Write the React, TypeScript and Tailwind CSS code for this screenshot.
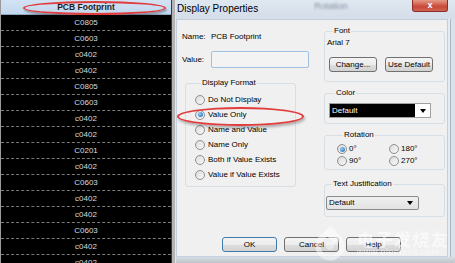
import React from "react";

const rows = [
  "C0805", "C0603", "c0402", "c0402", "C0805", "C0603", "c0402", "c0402",
  "C0201", "c0402", "C0603", "c0402", "c0402", "C0603", "c0402", "c0402",
];

function Radio({ checked }: { checked?: boolean }) {
  return (
    <span className="flex h-[10px] w-[10px] shrink-0 items-center justify-center rounded-full border border-[#8e8f8f] bg-[linear-gradient(135deg,#dcdcdc,#f8f8f8)]">
      {checked && (
        <span className="h-[5px] w-[5px] rounded-full bg-[radial-gradient(circle_at_35%_35%,#8fd0fa,#1d5fa6)]" />
      )}
    </span>
  );
}

function Btn({ label, w, def }: { label: string; w: string; def?: boolean }) {
  return (
    <div
      className={
        "flex h-[15px] items-center justify-center rounded-[3px] border bg-[linear-gradient(#f4f4f4_0%,#ececec_50%,#dedede_50%,#d2d2d2_100%)] text-[8px] leading-none text-black " +
        w +
        (def ? " border-[#3d7bad]" : " border-[#707070]")
      }
    >
      {label}
    </div>
  );
}

function Group({
  title,
  className,
  children,
}: {
  title: string;
  className?: string;
  children: React.ReactNode;
}) {
  return (
    <fieldset className={"rounded-[3px] border border-[#d5dfe5] " + (className || "")}>
      <legend className="ml-[6px] px-[1px] text-[8px] leading-[10px] text-black">{title}</legend>
      {children}
    </fieldset>
  );
}

export default function App() {
  return (
    <div className="relative flex h-[263px] w-[455px] overflow-hidden bg-[#d6dee8] [font-family:'Liberation_Sans',Arial,sans-serif]">
      {/* Spreadsheet column */}
      <div className="flex w-[171px] shrink-0 flex-col border-l border-[#9a9a9a] bg-black">
        <div className="relative flex h-[15px] shrink-0 items-center justify-center border-b border-[#8ea6c0] bg-[linear-gradient(#d3e3f5,#c2d7ee)] text-[8.5px] font-bold leading-none text-[#1b1b1b]">
          PCB Footprint
          <div className="absolute left-[22px] top-[1px] h-[14px] w-[143px] rounded-[50%] border-2 border-[#e23b3b] shadow-[1px_2px_2px_rgba(0,0,0,0.3)]" />
        </div>
        {rows.map((r, i) => (
          <div
            key={i}
            className="flex h-[16px] shrink-0 items-center justify-center border-b border-dashed border-[#7a7a7a] text-[8px] leading-none text-[#dcdcdc]"
          >
            {r}
          </div>
        ))}
      </div>

      {/* scrollbar / frame strip */}
      <div className="flex w-[5px] shrink-0">
        <div className="w-[1px] bg-[#3a3a3a]" />
        <div className="w-[3px] bg-[#b4b4b4]" />
        <div className="w-[1px] bg-[#dfe6ee]" />
      </div>

      {/* Dialog */}
      <div className="flex w-[279px] shrink-0 flex-col">
        {/* title bar */}
        <div className="flex h-[19px] shrink-0 items-start bg-[linear-gradient(#dfe7f0,#d4dde8)]">
          <span className="ml-[1px] mt-[3px] text-[10px] leading-[11px] text-black">Display Properties</span>
          <span className="ml-[56px] mt-[1px] text-[9px] leading-[10px] text-[#8593a2] blur-[1.2px]">Rotation</span>
          <div className="ml-auto mr-[7px] flex h-[12px] w-[36px] items-center justify-center rounded-b-[3px] border border-t-0 border-[#8b2b2b] bg-[linear-gradient(#e59a86,#c9483a_60%,#d0644f)] text-[9px] font-bold leading-none text-white">
            x
          </div>
        </div>

        <div className="flex flex-1">
          {/* client area */}
          <div className="flex h-[238px] w-[272px] shrink-0 flex-col border border-[#c3cfdc] bg-[#f0f0f0] text-[8px] leading-none text-black">
            <div className="flex">
              {/* left column */}
              <div className="flex w-[147px] shrink-0 flex-col">
                <div className="ml-[5px] mt-[12px] flex h-[10px] items-center">
                  <span className="w-[29px]">Name:</span>
                  <span>PCB Footprint</span>
                </div>
                <div className="ml-[5px] mt-[9px] flex h-[17px] items-center">
                  <span className="w-[29px]">Value:</span>
                  <div className="h-[17px] w-[98px] rounded-[2px] border border-[#9fc0de] bg-[#f3f3f3]" />
                </div>
                <Group title="Display Format" className="ml-[8px] mt-[10px] w-[111px] pb-[4px] pl-[9px] pt-[4px]">
                  {[
                    "Do Not Display",
                    "Value Only",
                    "Name and Value",
                    "Name Only",
                    "Both if Value Exists",
                    "Value if Value Exists",
                  ].map((t, i) => (
                    <div key={t} className="flex h-[15px] items-center gap-[3px]">
                      <Radio checked={i === 1} />
                      <span>{t}</span>
                    </div>
                  ))}
                </Group>
              </div>

              {/* right column */}
              <div className="flex w-[121px] shrink-0 flex-col">
                <Group title="Font" className="mt-[6px] pb-[9px] pl-[2px]">
                  <div className="mt-[2px] flex h-[10px] items-center">Arial 7</div>
                  <div className="ml-[2px] mt-[9px] flex gap-[8px]">
                    <Btn label="Change..." w="w-[48px]" />
                    <Btn label="Use Default" w="w-[48px]" />
                  </div>
                </Group>

                <Group title="Color" className="mt-[6px] pb-[5px] pl-[4px]">
                  <div className="mt-[5px] flex h-[15px] w-[102px] border border-[#a0a0a0] bg-white">
                    <div className="flex flex-1 items-center bg-black pl-[2px] text-white">Default</div>
                    <div className="flex w-[15px] items-center justify-center">
                      <svg width="6" height="4" viewBox="0 0 6 4">
                        <path d="M0 0h6L3 4z" fill="#000" />
                      </svg>
                    </div>
                  </div>
                </Group>

                <Group title="Rotation" className="mt-[6px] pb-[2px] pl-[12px]">
                  <div className="mt-[3px] grid grid-cols-[52px_1fr]">
                    {[
                      ["0°", true],
                      ["180°", false],
                      ["90°", false],
                      ["270°", false],
                    ].map(([t, c]) => (
                      <div key={t as string} className="flex h-[12px] items-center gap-[2px]">
                        <Radio checked={c as boolean} />
                        <span>{t as string}</span>
                      </div>
                    ))}
                  </div>
                </Group>

                <Group title="Text Justification" className="mt-[9px] pb-[6px] pl-[1px]">
                  <div className="mt-[7px] flex h-[14px] w-[93px] items-center justify-between rounded-[2px] border border-[#8a8a8a] bg-[linear-gradient(#f0f0f0,#e2e2e2)] pl-[2px] pr-[5px]">
                    <span>Default</span>
                    <svg width="6" height="4" viewBox="0 0 6 4">
                      <path d="M0 0h6L3 4z" fill="#000" />
                    </svg>
                  </div>
                </Group>
              </div>
            </div>

            <div className="mb-[4px] ml-[45px] mt-auto flex gap-[7px]">
              <Btn label="OK" w="w-[55px]" def />
              <Btn label="Cancel" w="w-[55px]" />
              <Btn label="Help" w="w-[55px]" />
            </div>
          </div>

          {/* right frame */}
          <div className="flex flex-1">
            <div className="w-[2px] bg-[#e4eaf1]" />
            <div className="w-[1px] bg-[#a9b6c4]" />
            <div className="flex-1 bg-[#d9e1ea]" />
          </div>
        </div>
        <div className="flex-1 bg-[linear-gradient(#d8dde3,#bfc4ca)]" />
      </div>

      {/* red ellipse around Value Only */}
      <div className="absolute left-[177px] top-[107px] h-[19px] w-[127px] rounded-[50%] border-2 border-[#e23b3b] shadow-[1px_2px_3px_rgba(0,0,0,0.3)]" />

      {/* watermark */}
      <div className="pointer-events-none absolute left-[308px] top-[222px] flex items-start text-white opacity-60">
        <svg width="46" height="40" viewBox="0 0 46 40" className="mt-[2px]">
          <circle cx="22" cy="22" r="12" fill="none" stroke="#fff" strokeWidth="5" opacity="0.8" />
          <path d="M22 2c8 4 10 12 4 18-2-6-8-6-10-12 2-2 4-4 6-6z" fill="#fff" opacity="0.85" />
          <circle cx="22" cy="22" r="4" fill="#fff" opacity="0.6" />
        </svg>
        <div className="ml-[3px] flex flex-col">
          <span className="mt-[8px] text-[17px] font-bold leading-[17px] tracking-[1.5px] [font-family:'Noto_Sans_CJK_SC',sans-serif]">电子发烧友</span>
          <span className="text-[9px] leading-[10px] tracking-[0.5px]">www.elecfans.com</span>
        </div>
      </div>
    </div>
  );
}
